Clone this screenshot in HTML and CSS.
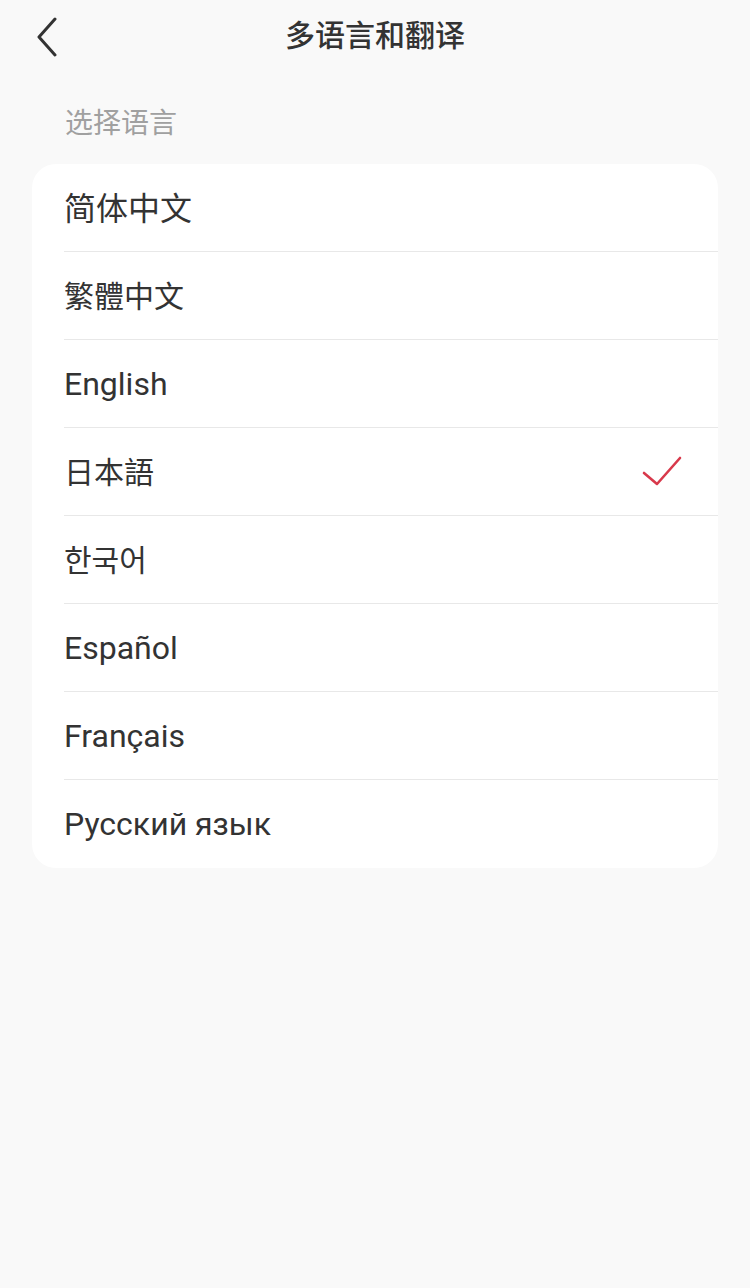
FILE: index.html
```html
<!DOCTYPE html>
<html>
<head>
    <title>多语言和翻译</title>
    <link rel="stylesheet" href="styles.css">
</head>
<body>
    <div class="header">
        <svg class="back" width="24" height="40" viewBox="0 0 24 40">
            <path d="M20 2 L4 20 L20 38" fill="none" stroke="#333" stroke-width="3" stroke-linecap="round" stroke-linejoin="round"/>
        </svg>
        <div class="title">多语言和翻译</div>
    </div>
    <div class="section-label">选择语言</div>
    <div class="card">
        <div class="row"><span class="cjk big">简体中文</span></div>
        <div class="row"><span class="cjk">繁體中文</span></div>
        <div class="row"><span>English</span></div>
        <div class="row"><span class="cjk">日本語</span>
            <svg class="check" width="44" height="36" viewBox="0 0 44 36">
                <path d="M4 19 L17 30 L40 4" fill="none" stroke="#d8394b" stroke-width="2.6" stroke-linecap="round" stroke-linejoin="round"/>
            </svg>
        </div>
        <div class="row"><span class="cjk">한국어</span></div>
        <div class="row"><span>Español</span></div>
        <div class="row"><span>Français</span></div>
        <div class="row"><span>Русский язык</span></div>
    </div>
</body>
</html>
```

FILE: styles.css
```css
body {
    margin: 0;
    background-color: #f9f9f9;
    font-family: Roboto, "Noto Sans CJK SC", sans-serif;
    color: #333;
}

.header {
    position: relative;
    height: 66px;
    display: flex;
    align-items: center;
    justify-content: center;
}

.back {
    position: absolute;
    left: 35px;
    top: 17px;
}

.title {
    font-family: "Noto Sans CJK SC", sans-serif;
    font-size: 30px;
    font-weight: 500;
    color: #333;
}

.section-label {
    font-family: "Noto Sans CJK SC", sans-serif;
    font-size: 28px;
    color: #a0a0a0;
    line-height: 34px;
    padding: 38px 0 0 65px;
    margin-bottom: 26px;
}

.card {
    margin: 0 32px;
    background-color: white;
    border-radius: 24px;
    padding-left: 32px;
    overflow: hidden;
}

.row {
    height: 88px;
    display: flex;
    align-items: center;
    justify-content: space-between;
    font-size: 32px;
    border-bottom: 1px solid #e8e8e8;
    box-sizing: border-box;
}

.row:last-child {
    border-bottom: none;
}

.row .cjk {
    font-family: "Noto Sans CJK SC", sans-serif;
    font-size: 30px;
    padding-bottom: 4px;
}

.row .big {
    font-size: 32px;
}

.check {
    margin-right: 34px;
}
```
